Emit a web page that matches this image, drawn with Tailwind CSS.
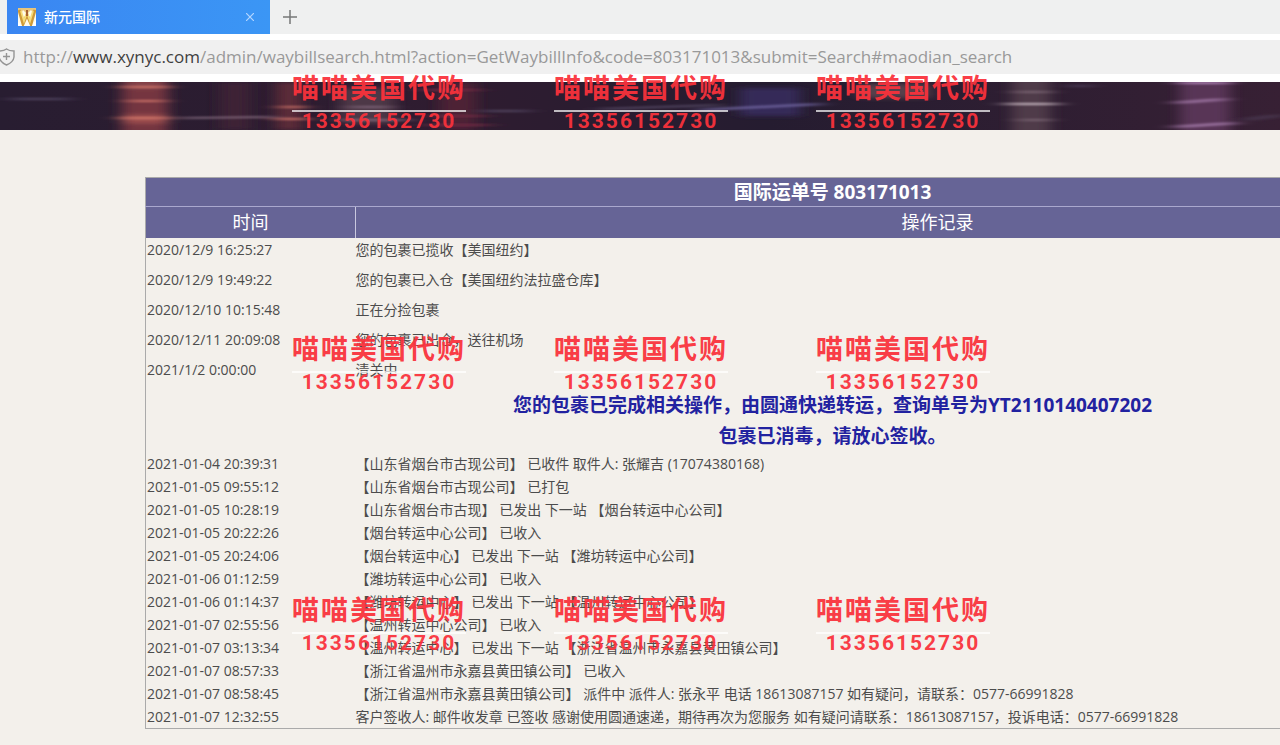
<!DOCTYPE html>
<html lang="zh-CN">
<head>
<meta charset="utf-8">
<title>新元国际</title>
<script src="https://cdn.jsdelivr.net/npm/@tailwindcss/browser@4"></script>
</head>
<body class="relative min-h-screen overflow-x-hidden bg-[#f3f0eb] font-['Open_Sans','Noto_Sans_CJK_SC',sans-serif] text-[#4c4c4c]">

<nav class="flex h-[34px] items-stretch bg-[#eff0f0] pl-[7px]" aria-label="标签页">
  <div class="flex w-[263px] items-center bg-gradient-to-r from-[#3a86f2] to-[#3b96f5] pr-3 pl-[11px] text-white">
    <svg class="h-[18px] w-[18px]" viewBox="0 0 18 18" aria-hidden="true">
      <rect width="18" height="18" fill="#fffbea"/>
      <path d="M0 0H18V3L15 5L13 2L9 6L5 2L3 6L0 2Z" fill="#e9c57b"/>
      <path d="M1 2L5 16L9 7L13 16L17 2" fill="none" stroke="#cf9a38" stroke-width="3"/>
      <path d="M3 3L6 13L9 4L12 13L15 3" fill="none" stroke="#f6dc7a" stroke-width="1.800"/>
      <path d="M9 2V8" stroke="#8e3a1c" stroke-width="1.500"/>
      <path d="M0 14L4 18H0ZM18 12V18H14Z" fill="#fff"/>
    </svg>
    <span class="ml-2 text-[14px] leading-5 font-medium">新元国际</span>
    <button type="button" class="ml-auto p-1" aria-label="关闭标签页">
      <svg class="h-2 w-2" viewBox="0 0 8 8" fill="none" stroke="#b5d6ff" stroke-width="1.200"><path d="M0 0L8 8M8 0L0 8"/></svg>
    </button>
  </div>
  <button type="button" class="ml-3 px-px" aria-label="新标签页">
    <svg class="h-[14px] w-[14px]" viewBox="0 0 14 14" fill="none" stroke="#777" stroke-width="1.500"><path d="M7 0V14M0 7H14"/></svg>
  </button>
</nav>

<header class="flex h-[48px] items-center border-t-[6px] border-b-[8px] border-white bg-[#f0f0f0]">
  <svg class="h-[18px] w-[15px] shrink-0" viewBox="0 0 15 18" fill="none" stroke="#949494" stroke-width="1.400" aria-hidden="true"><path d="M-1 3Q4 3 6.500 1Q9 3 14 3V9Q13.500 14 6.500 17Q0 14 -1 9Z"/><path d="M6.500 5V12M3 8.500H10"/></svg>
  <div role="textbox" aria-label="地址" contenteditable="true" spellcheck="false" class="ml-2 grow text-[17px] leading-6 whitespace-nowrap text-[#999]">http://<span class="text-[#3f3f3f]">www.xynyc.com</span>/admin/waybillsearch.html?action=GetWaybillInfo&amp;code=803171013&amp;submit=Search#maodian_search</div>
</header>

<svg class="block h-[48px] w-full bg-[#281c2c]" viewBox="0 0 1280 48" preserveAspectRatio="none" aria-hidden="true">
  <defs>
    <filter id="soft" x="-40%" y="-50%" width="180%" height="200%"><feGaussianBlur stdDeviation="7 2"/></filter>
    <filter id="streak" x="-20%" y="-400%" width="140%" height="900%"><feGaussianBlur stdDeviation="10 0.800"/></filter>
    <linearGradient id="base" x1="0" x2="1" y1="0" y2="0">
      <stop offset="0" stop-color="#281d31"/><stop offset=".35" stop-color="#2f1c30"/><stop offset=".6" stop-color="#251c30"/><stop offset="1" stop-color="#372034"/>
    </linearGradient>
  </defs>
  <rect width="1280" height="48" fill="url(#base)"/>
  <g filter="url(#soft)">
    <rect x="122" y="-4" width="46" height="56" fill="#74353f"/>
    <rect x="126" y="-2" width="38" height="9" fill="#854348"/>
    <rect x="122" y="33" width="46" height="8" fill="#a04f50"/>
    <rect x="220" y="0" width="30" height="48" fill="#3c2436"/>
    <rect x="276" y="0" width="26" height="48" fill="#5c2b38"/>
    <rect x="340" y="6" width="54" height="36" fill="#4d3947"/>
    <rect x="440" y="0" width="36" height="48" fill="#4d2135"/>
    <rect x="740" y="6" width="60" height="28" fill="#352c58"/>
    <rect x="860" y="2" width="70" height="14" fill="#57404b"/>
    <rect x="1012" y="-4" width="38" height="56" fill="#4f3a49"/>
    <rect x="1180" y="-4" width="50" height="56" fill="#583456"/>
  </g>
  <g filter="url(#streak)">
    <path d="M10 17H70M600 27L720 23M480 29H530M1070 4H1090M1245 38L1280 33" stroke="#5c506c" stroke-width="1.500"/>
    <path d="M122 5H168M128 19H164M280 25H305M120 36H168M275 37H308" stroke="#cf7569" stroke-width="1.800"/>
    <path d="M180 36L275 35M350 25H390M340 38H410" stroke="#8d7387" stroke-width="1.500"/>
    <path d="M430 34H485M425 43H490M420 8H480" stroke="#702c42" stroke-width="2"/>
    <path d="M700 28L820 22" stroke="#7469a5" stroke-width="2"/>
    <path d="M1005 22H1058" stroke="#c4b4be" stroke-width="2"/>
    <path d="M1015 10H1050M1020 38H1050" stroke="#7c6674" stroke-width="2"/>
    <path d="M1175 21L1225 17M1175 45L1235 41M1178 1H1230" stroke="#b186b8" stroke-width="2"/>
  </g>
</svg>

<main class="overflow-hidden pt-[47px] pb-2 pl-[145px]">
  <table class="w-full min-w-[1375px] table-fixed border-collapse border border-[#aaa] text-[14px]">
    <colgroup><col class="w-[210px]"><col></colgroup>
    <thead class="bg-[#666496] text-white">
      <tr class="h-[29px]"><th colspan="2" scope="colgroup" class="border-b border-[#aaa8ce] p-0 text-[19px] leading-6 font-bold">国际运单号 803171013</th></tr>
      <tr class="h-[31px]"><th scope="col" class="border-r border-[#c9c8df] p-0 text-[18px] leading-6 font-normal">时间</th><th scope="col" class="p-0 text-[18px] leading-6 font-normal">操作记录</th></tr>
    </thead>
    <tbody class="align-top leading-[24px]">
      <tr class="h-[30px]"><td class="p-0 pl-px">2020/12/9 16:25:27</td><td class="p-0">您的包裹已揽收【美国纽约】</td></tr>
      <tr class="h-[30px]"><td class="p-0 pl-px">2020/12/9 19:49:22</td><td class="p-0">您的包裹已入仓【美国纽约法拉盛仓库】</td></tr>
      <tr class="h-[30px]"><td class="p-0 pl-px">2020/12/10 10:15:48</td><td class="p-0">正在分捡包裹</td></tr>
      <tr class="h-[30px]"><td class="p-0 pl-px">2020/12/11 20:09:08</td><td class="p-0">您的包裹已出仓，送往机场</td></tr>
      <tr class="h-[30px]"><td class="p-0 pl-px">2021/1/2 0:00:00</td><td class="p-0">清关中</td></tr>
    </tbody>
    <tbody>
      <tr><td colspan="2" class="p-0 pt-[2px] text-center text-[19px] leading-[31px] font-bold text-[#2222a0]">您的包裹已完成相关操作，由圆通快递转运，查询单号为YT2110140407202<br>包裹已消毒，请放心签收。</td></tr>
    </tbody>
    <tbody class="leading-[23px] whitespace-nowrap">
      <tr><td class="p-0 pl-px">2021-01-04 20:39:31</td><td class="p-0">【山东省烟台市古现公司】 已收件 取件人: 张耀吉 (17074380168)</td></tr>
      <tr><td class="p-0 pl-px">2021-01-05 09:55:12</td><td class="p-0">【山东省烟台市古现公司】 已打包</td></tr>
      <tr><td class="p-0 pl-px">2021-01-05 10:28:19</td><td class="p-0">【山东省烟台市古现】 已发出 下一站 【烟台转运中心公司】</td></tr>
      <tr><td class="p-0 pl-px">2021-01-05 20:22:26</td><td class="p-0">【烟台转运中心公司】 已收入</td></tr>
      <tr><td class="p-0 pl-px">2021-01-05 20:24:06</td><td class="p-0">【烟台转运中心】 已发出 下一站 【潍坊转运中心公司】</td></tr>
      <tr><td class="p-0 pl-px">2021-01-06 01:12:59</td><td class="p-0">【潍坊转运中心公司】 已收入</td></tr>
      <tr><td class="p-0 pl-px">2021-01-06 01:14:37</td><td class="p-0">【潍坊转运中心】 已发出 下一站 【温州转运中心公司】</td></tr>
      <tr><td class="p-0 pl-px">2021-01-07 02:55:56</td><td class="p-0">【温州转运中心公司】 已收入</td></tr>
      <tr><td class="p-0 pl-px">2021-01-07 03:13:34</td><td class="p-0">【温州转运中心】 已发出 下一站 【浙江省温州市永嘉县黄田镇公司】</td></tr>
      <tr><td class="p-0 pl-px">2021-01-07 08:57:33</td><td class="p-0">【浙江省温州市永嘉县黄田镇公司】 已收入</td></tr>
      <tr><td class="p-0 pl-px">2021-01-07 08:58:45</td><td class="p-0">【浙江省温州市永嘉县黄田镇公司】 派件中 派件人: 张永平 电话 18613087157 如有疑问，请联系：0577-66991828</td></tr>
      <tr><td class="p-0 pl-px">2021-01-07 12:32:55</td><td class="p-0">客户签收人: 邮件收发章 已签收 感谢使用圆通速递，期待再次为您服务 如有疑问请联系：18613087157，投诉电话：0577-66991828</td></tr>
    </tbody>
  </table>
</main>

<!-- Tiled seller watermark over the whole page -->
<div class="pointer-events-none absolute inset-0 grid auto-rows-[261px] grid-cols-[repeat(3,262px)] justify-items-center overflow-hidden pt-[71px] pl-[248px] font-['Roboto','Noto_Sans_CJK_SC',sans-serif] font-bold text-[#fa323b]/95">
  <div><p class="text-[27px] leading-9 tracking-[2px]">喵喵美国代购</p><p class="mt-[3px] border-t-2 border-white/70 text-center text-[21px] leading-[18px] tracking-[2px]">13356152730</p></div>
  <div><p class="text-[27px] leading-9 tracking-[2px]">喵喵美国代购</p><p class="mt-[3px] border-t-2 border-white/70 text-center text-[21px] leading-[18px] tracking-[2px]">13356152730</p></div>
  <div><p class="text-[27px] leading-9 tracking-[2px]">喵喵美国代购</p><p class="mt-[3px] border-t-2 border-white/70 text-center text-[21px] leading-[18px] tracking-[2px]">13356152730</p></div>
  <div><p class="text-[27px] leading-9 tracking-[2px]">喵喵美国代购</p><p class="mt-[3px] border-t-2 border-white/70 text-center text-[21px] leading-[18px] tracking-[2px]">13356152730</p></div>
  <div><p class="text-[27px] leading-9 tracking-[2px]">喵喵美国代购</p><p class="mt-[3px] border-t-2 border-white/70 text-center text-[21px] leading-[18px] tracking-[2px]">13356152730</p></div>
  <div><p class="text-[27px] leading-9 tracking-[2px]">喵喵美国代购</p><p class="mt-[3px] border-t-2 border-white/70 text-center text-[21px] leading-[18px] tracking-[2px]">13356152730</p></div>
  <div><p class="text-[27px] leading-9 tracking-[2px]">喵喵美国代购</p><p class="mt-[3px] border-t-2 border-white/70 text-center text-[21px] leading-[18px] tracking-[2px]">13356152730</p></div>
  <div><p class="text-[27px] leading-9 tracking-[2px]">喵喵美国代购</p><p class="mt-[3px] border-t-2 border-white/70 text-center text-[21px] leading-[18px] tracking-[2px]">13356152730</p></div>
  <div><p class="text-[27px] leading-9 tracking-[2px]">喵喵美国代购</p><p class="mt-[3px] border-t-2 border-white/70 text-center text-[21px] leading-[18px] tracking-[2px]">13356152730</p></div>
</div>
</body>
</html>
